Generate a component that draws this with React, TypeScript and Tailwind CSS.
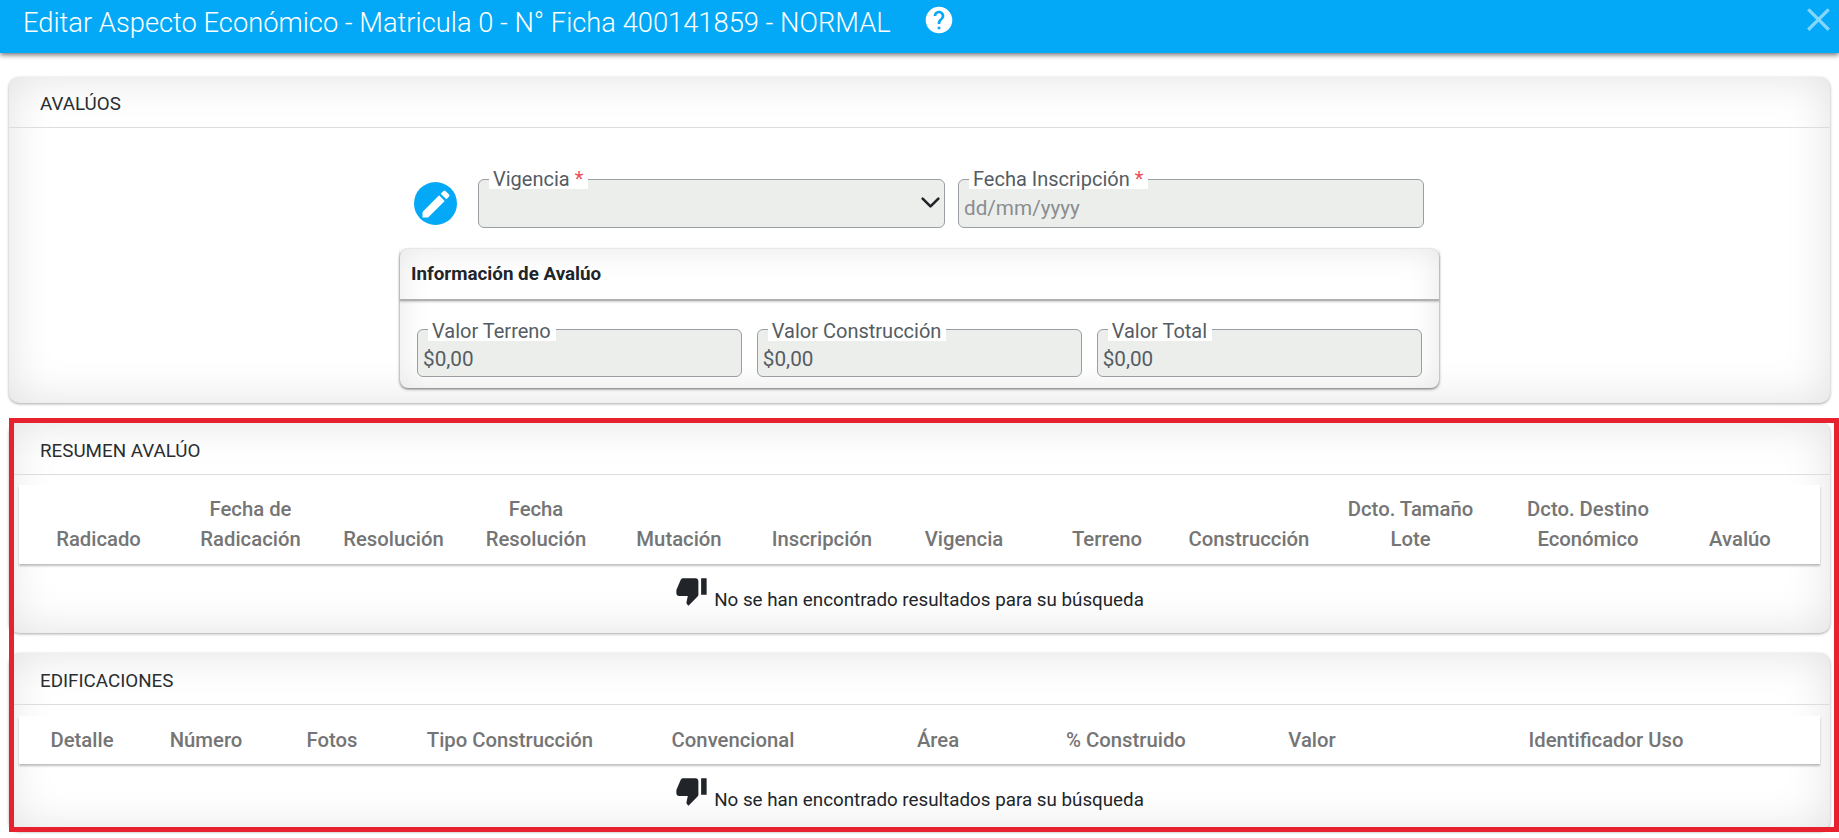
import { MdEdit, MdHelp, MdThumbDown, MdClose } from 'react-icons/md';

const RESUMEN = [
  ['', 'Radicado'],
  ['Fecha de', 'Radicación'],
  ['', 'Resolución'],
  ['Fecha', 'Resolución'],
  ['', 'Mutación'],
  ['', 'Inscripción'],
  ['', 'Vigencia'],
  ['', 'Terreno'],
  ['', 'Construcción'],
  ['Dcto. Tamaño', 'Lote'],
  ['Dcto. Destino', 'Económico'],
  ['', 'Avalúo'],
];

const EDIFICACIONES = ['Detalle', 'Número', 'Fotos', 'Tipo Construcción', 'Convencional', 'Área', '% Construido', 'Valor', 'Identificador Uso'];

export default function App() {
  return (
    <div className="relative h-[838px] overflow-hidden bg-white font-['Roboto',sans-serif]">
      <header className="relative z-10 flex h-[53px] items-start bg-[#03a9f6] pl-[23px] shadow-[0_2px_5px_rgba(0,0,0,0.55)]">
        <h1 className="mt-[5px] text-[27.3px] leading-[36px] font-light text-white">
          Editar Aspecto Económico - Matricula 0 - N° Ficha 400141859 - NORMAL
        </h1>
        <MdHelp className="mt-[4px] ml-[32px] text-white" size={32} />
        <MdClose className="ml-auto mr-[1px] text-[#85d6fb]" size={39} />
      </header>

      <main className="flex flex-col pt-[24px] pr-[9px] pl-[9px]">
        {/* Avalúos */}
        <section className="h-[326px] rounded-[10px] bg-white shadow-[inset_0_0_45px_rgba(0,0,0,0.12),0_1px_3px_rgba(0,0,0,0.35)]">
          <CardTitle className="h-[51px] pt-[4px]">AVALÚOS</CardTitle>
          <div className="flex flex-col items-center pt-[51px]">
            <div className="mr-[1px] flex items-center">
              <div className="flex h-[43px] w-[43px] items-center justify-center rounded-full bg-[#03a9f6]">
                <MdEdit className="text-white" size={36} />
              </div>
              <Field label="Vigencia" required className="ml-[21px] h-[49px] w-[467px] pt-[10px]" labelClass="top-[-10px]">
                <svg className="absolute top-[12px] right-[3px] h-[21px] w-[21px]" viewBox="0 0 16 16" fill="none">
                  <path d="m2 5 6 6 6-6" stroke="#212529" strokeWidth="2" strokeLinecap="round" strokeLinejoin="round" />
                </svg>
              </Field>
              <Field label="Fecha Inscripción" required className="ml-[13px] h-[49px] w-[466px] pt-[10px]" labelClass="top-[-10px]">
                <span className="text-[#8a8d8f]">dd/mm/yyyy</span>
              </Field>
            </div>

            <div className="mt-[21px] h-[139px] w-[1039px] rounded-[8px] bg-white shadow-[inset_0_0_32px_rgba(0,0,0,0.1),0_1px_3px_rgba(0,0,0,0.6)]">
              <div className="flex h-[52px] items-center border-b-[2px] border-[#b0b0b0] pl-[11px] text-[18.8px] font-bold text-[#212529] shadow-[0_1px_2px_rgba(0,0,0,0.2)]">
                Información de Avalúo
              </div>
              <div className="grid grid-cols-3 gap-[14.5px] px-[17px] pt-[28px]">
                <Field label="Valor Terreno" labelClass="top-[-8px]" className="h-[48px] pt-[11px]"><span>$0,00</span></Field>
                <Field label="Valor Construcción" labelClass="top-[-8px]" className="h-[48px] pt-[11px]"><span>$0,00</span></Field>
                <Field label="Valor Total" labelClass="top-[-8px]" className="h-[48px] pt-[11px]"><span>$0,00</span></Field>
              </div>
            </div>
          </div>
        </section>

        {/* Resumen avalúo */}
        <section className="mt-[19px] h-[211px] rounded-[10px] bg-white shadow-[inset_0_0_45px_rgba(0,0,0,0.12),0_1px_3px_rgba(0,0,0,0.35)]">
          <CardTitle className="h-[53px] pt-[6px]">RESUMEN AVALÚO</CardTitle>
          <div className="mx-[10px] mt-[10px] grid h-[79px] grid-cols-[159px_145px_141px_144px_142px_144px_140px_146px_138px_185px_170px_134px] items-end bg-white pb-[10px] text-center text-[20.3px] leading-[30px] font-medium text-[#757575] shadow-[0_2px_2px_rgba(0,0,0,0.25)]">
            {RESUMEN.map(([top, bottom], i) => (
              <div key={i}>
                {top && <div>{top}</div>}
                <div>{bottom}</div>
              </div>
            ))}
          </div>
          <NoResults />
        </section>

        {/* Edificaciones */}
        <section className="mt-[20px] h-[178px] rounded-[10px] bg-white shadow-[inset_0_0_45px_rgba(0,0,0,0.12),0_1px_3px_rgba(0,0,0,0.35)]">
          <CardTitle className="h-[52px] pt-[5px]">EDIFICACIONES</CardTitle>
          <div className="mx-[10px] mt-[11px] grid h-[48px] grid-cols-[126px_122px_130px_226px_220px_190px_186px_186px_402px] items-center bg-white text-center text-[20.3px] font-medium text-[#757575] shadow-[0_2px_2px_rgba(0,0,0,0.25)]">
            {EDIFICACIONES.map(name => (
              <div key={name}>{name}</div>
            ))}
          </div>
          <NoResults />
        </section>
      </main>

      {/* Recuadro rojo de la captura */}
      <div className="pointer-events-none absolute top-[418px] left-[9px] h-[414px] w-[1830px] border-[5px] border-[#e8212e]" />
    </div>
  );
}

function CardTitle({ children, className }: { children: React.ReactNode; className?: string }) {
  return (
    <div className={`flex items-center border-b border-[#dddddd] pl-[31px] text-[18.8px] text-[#2a2d30] ${className}`}>
      {children}
    </div>
  );
}

function Field({ label, required, className, labelClass, children }: { label: string; required?: boolean; className?: string; labelClass?: string; children?: React.ReactNode }) {
  return (
    <div className={`relative rounded-[6px] border border-[#9a9ea2] bg-[#eceeec] pl-[5px] text-[20.7px] leading-[36px] text-[#555c63] ${className}`}>
      <div className={`absolute left-[10px] bg-white pr-[5px] pl-[4px] text-[20px] leading-[19px] text-[#555c63] ${labelClass}`}>
        {label}
        {required && <span className="text-[#e8505a]"> *</span>}
      </div>
      {children}
    </div>
  );
}

function NoResults() {
  return (
    <div className="flex items-end justify-center pt-[10px] pr-[20px] text-[18.8px] leading-[27px] text-[#212529]">
      <MdThumbDown size={33} className="mr-[6px] mb-[7px]" />
      <span>No se han encontrado resultados para su búsqueda</span>
    </div>
  );
}
